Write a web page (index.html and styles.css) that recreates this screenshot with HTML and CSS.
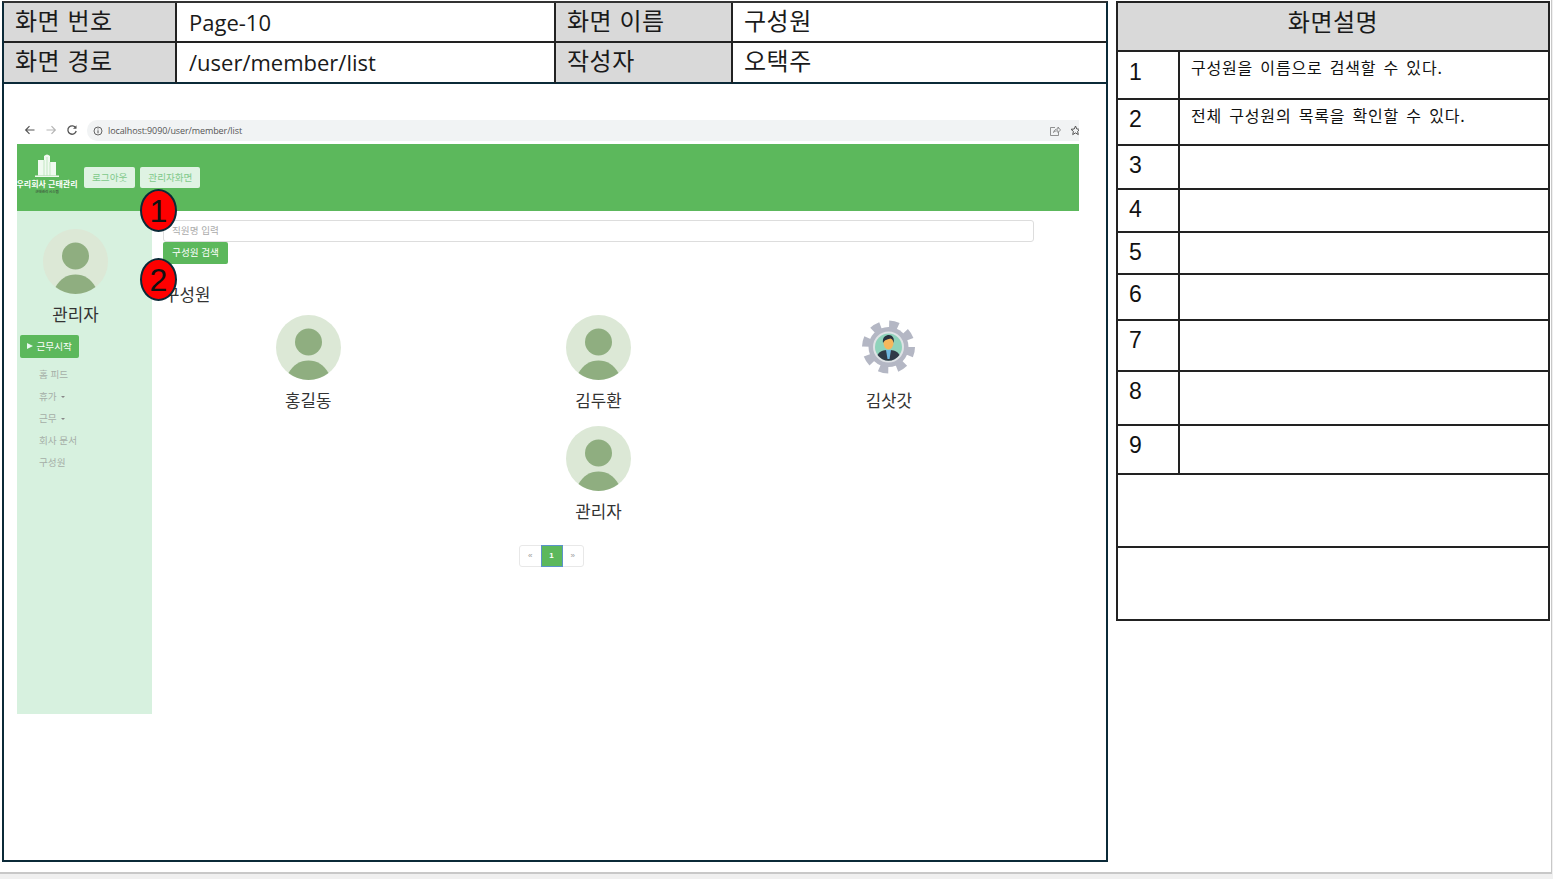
FILE: index.html
```html
<!DOCTYPE html>
<html lang="ko">
<head>
    <meta charset="UTF-8">
    <title>화면 설계 - Page-10</title>
    <link rel="stylesheet" href="styles.css">
</head>
<body>
    <div class="slide">
        <section class="screen">
            <div class="info">
                <div class="cell label">화면 번호</div>
                <div class="cell latin">Page-10</div>
                <div class="cell label">화면 이름</div>
                <div class="cell last">구성원</div>
                <div class="cell label">화면 경로</div>
                <div class="cell latin">/user/member/list</div>
                <div class="cell label">작성자</div>
                <div class="cell last">오택주</div>
            </div>

            <div class="shot">
                <div class="browser">
                    <svg class="nav-icon" width="12" height="12" viewBox="0 0 12 12"><path d="M10.5 6H2M5.5 2.2 1.7 6l3.8 3.8" fill="none" stroke="#555" stroke-width="1.2"/></svg>
                    <svg class="nav-icon" width="12" height="12" viewBox="0 0 12 12"><path d="M1.5 6H10M6.500 2.200 10.300 6l-3.800 3.800" fill="none" stroke="#b5b5b5" stroke-width="1.2"/></svg>
                    <svg class="nav-icon" width="12" height="12" viewBox="0 0 12 12"><path d="M9.800 4A4.200 4.200 0 1 0 10.200 7" fill="none" stroke="#555" stroke-width="1.300"/><path d="M10.500 1.300v3.500H7z" fill="#555"/></svg>
                    <div class="address">
                        <svg width="10" height="10" viewBox="0 0 10 10"><circle cx="5" cy="5" r="4" fill="none" stroke="#555" stroke-width="0.9"/><path d="M5 4.300v3M5 2.400v1" stroke="#555" stroke-width="1"/></svg>
                        <span class="url">localhost:9090/user/member/list</span>
                        <svg class="share" width="12" height="12" viewBox="0 0 12 12"><path d="M6 2.500H1.500v8h8V7M4.500 7.500c.5-2.500 2.300-3.500 4.500-3.500V2l2.500 3L9 7.500V5.800c-2 0-3.500.4-4.500 1.700z" fill="none" stroke="#777" stroke-width="0.8"/></svg>
                        <svg class="star" width="11" height="11" viewBox="0 0 11 11"><path d="M5.500 1l1.300 3 3.200.3-2.400 2.100.7 3.200-2.800-1.700-2.800 1.700.7-3.200L1 4.300 4.200 4z" fill="none" stroke="#555" stroke-width="1"/></svg>
                    </div>
                </div>

                <header class="topbar">
                    <div class="logo">
                        <svg width="24" height="23" viewBox="0 0 24 23">
                            <path d="M0 23h24v-1.500H0z" fill="#f0faf0"/>
                            <path d="M3 21.500V6h6v15.500zM9 21.500V2Q12 -1 15 2v19.500zM15 21.500V8h6v13.500z" fill="#f0faf0"/>
                            <path d="M9 6v15.500M15 8v13.500M12 3v18.500" stroke="#a5dba5" stroke-width="0.6"/>
                        </svg>
                        <strong>우리회사 근태관리</strong>
                        <small>근태관리 시스템</small>
                    </div>
                    <a class="top-btn">로그아웃</a>
                    <a class="top-btn">관리자화면</a>
                </header>

                <div class="page">
                    <aside class="sidebar">
                        <svg class="avatar side-avatar" viewBox="0 0 65 65"><use href="#person"/></svg>
                        <div class="side-name">관리자</div>
                        <button class="start-btn"><span class="play"></span>근무시작</button>
                        <ul class="menu">
                            <li>홈 피드</li>
                            <li>휴가<span class="caret"></span></li>
                            <li>근무<span class="caret"></span></li>
                            <li>회사 문서</li>
                            <li>구성원</li>
                        </ul>
                    </aside>

                    <main class="content">
                        <div class="search-input">직원명 입력</div>
                        <button class="search-btn">구성원 검색</button>
                        <h2>구성원</h2>
                        <div class="members">
                            <div class="member">
                                <svg class="avatar" viewBox="0 0 65 65"><use href="#person"/></svg>
                                <span>홍길동</span>
                            </div>
                            <div class="member">
                                <svg class="avatar" viewBox="0 0 65 65"><use href="#person"/></svg>
                                <span>김두환</span>
                            </div>
                            <div class="member">
                                <svg class="avatar" viewBox="0 0 65 65">
                                    <circle cx="32.500" cy="32" r="22.500" fill="none" stroke="#b4b7c4" stroke-width="8" stroke-dasharray="9 8.670"/>
                                    <circle cx="32.500" cy="32" r="20" fill="#b4b7c4"/>
                                    <circle cx="32.500" cy="32" r="15.500" fill="#dfe3e6"/>
                                    <circle cx="32.500" cy="32" r="13.500" fill="#8fd3bb"/>
                                    <path d="M21.500 40c2-4 6-5 11-5s9 1 11 5a13.500 13.500 0 0 1-22 0z" fill="#2f3a47"/>
                                    <path d="M30 35h5l-1.500 9h-2z" fill="#6fb7e0"/>
                                    <ellipse cx="32.500" cy="28" rx="5" ry="6.500" fill="#f6b75c"/>
                                    <path d="M27 28c-1-6 3-8 6-8s6 3 4.500 8c-.5-3-1.500-4-3-4.500-2 1-5.500.5-7.500 4.500z" fill="#28323f"/>
                                </svg>
                                <span>김삿갓</span>
                            </div>
                            <div class="member second">
                                <svg class="avatar" viewBox="0 0 65 65"><use href="#person"/></svg>
                                <span>관리자</span>
                            </div>
                        </div>
                        <nav class="pager">
                            <a>«</a>
                            <a class="current">1</a>
                            <a>»</a>
                        </nav>
                    </main>
                </div>

                <div class="marker one">1</div>
                <div class="marker two">2</div>
            </div>
        </section>

        <section class="desc">
            <div class="desc-title">화면설명</div>
            <div class="num h48">1</div><div class="text h48">구성원을 이름으로 검색할 수 있다.</div>
            <div class="num h46">2</div><div class="text h46">전체 구성원의 목록을 확인할 수 있다.</div>
            <div class="num">3</div><div class="text"></div>
            <div class="num">4</div><div class="text"></div>
            <div class="num">5</div><div class="text"></div>
            <div class="num">6</div><div class="text"></div>
            <div class="num">7</div><div class="text"></div>
            <div class="num">8</div><div class="text"></div>
            <div class="num">9</div><div class="text"></div>
            <div class="desc-empty"></div>
            <div class="desc-empty"></div>
        </section>
    </div>

    <svg width="0" height="0" class="defs">
        <defs>
            <g id="person">
                <circle cx="32.500" cy="32.500" r="32.500" fill="#dce8d6"/>
                <circle cx="32.500" cy="27" r="13.500" fill="#8fae80"/>
                <path d="M12.500 58.100C17 50 24 45.500 32.500 45.500S48 50 52.500 58.100A32.500 32.500 0 0 1 12.500 58.100z" fill="#8fae80"/>
            </g>
        </defs>
    </svg>
</body>
</html>
```

FILE: styles.css
```css
* {
    box-sizing: border-box;
}
body {
    margin: 0;
    height: 879px;
    overflow: hidden;
    background-color: #f0f0f0;
    color: #111;
    font-family: "Noto Sans CJK KR", "Noto Sans", sans-serif;
}
.slide {
    display: flex;
    align-items: flex-start;
    gap: 8px;
    width: 1552px;
    height: 874px;
    padding: 1px 0 0 2px;
    background-color: white;
    border-right: 1px solid #c8c8c8;
    border-bottom: 2px solid #c8c8c8;
}
.defs {
    position: absolute;
}

/* left frame */
.screen {
    width: 1106px;
    height: 861px;
    border: 2px solid #0b2a38;
    border-top-color: #333;
}
.info {
    display: grid;
    grid-template-columns: 173px 379px 177px 1fr;
    grid-template-rows: 40px 41px;
}
.cell {
    padding: 0 0 4px 11px;
    font-size: 24px;
    line-height: 34px;
    letter-spacing: 0.500px;
    color: #1a1a1a;
    border-right: 2px solid #222;
    border-bottom: 2px solid #222;
    white-space: nowrap;
}
.cell.label {
    background-color: #d9d9d9;
}
.cell.latin {
    padding: 2px 0 0 12px;
    font-family: "Open Sans", sans-serif;
    font-size: 22px;
    letter-spacing: 0;
}
.cell.last {
    border-right: none;
}
.info .cell:nth-child(n+5) {
    border-bottom-color: #0b2a38;
}

/* pasted screenshot */
.shot {
    position: relative;
    width: 1062px;
    height: 594px;
    margin: 36px 0 0 13px;
}
.browser {
    display: flex;
    align-items: flex-start;
    height: 24px;
    padding-left: 7px;
    gap: 9px;
}
.nav-icon {
    margin-top: 4px;
}
.address {
    display: flex;
    align-items: center;
    gap: 5px;
    flex: 1;
    height: 21px;
    padding-left: 6px;
    overflow: hidden;
    background-color: #f1f3f4;
    border-radius: 10px 0 0 10px;
}
.url {
    font-family: "Open Sans", sans-serif;
    font-size: 9px;
    letter-spacing: -0.1px;
    color: #555;
}
.share {
    margin-left: auto;
}
.star {
    margin: 0 -2px 0 4px;
}
.topbar {
    display: flex;
    align-items: flex-start;
    gap: 5px;
    height: 67px;
    background-color: #5cb85c;
}
.logo {
    display: flex;
    flex-direction: column;
    align-items: center;
    width: 60px;
    margin-right: 2px;
    padding-top: 10px;
    color: white;
}
.logo strong {
    margin-top: 1px;
    font-size: 8px;
    line-height: 12px;
    white-space: nowrap;
}
.logo small {
    font-size: 3.500px;
    line-height: 4px;
    color: #333;
    white-space: nowrap;
}
.top-btn {
    height: 21px;
    margin-top: 23px;
    padding: 0 8px;
    font-size: 9.600px;
    line-height: 20px;
    color: #80c98a;
    background-color: #dff3e3;
    border-radius: 2px;
}
.page {
    display: flex;
    height: 503px;
}

/* sidebar */
.sidebar {
    width: 135px;
    padding-top: 18px;
    background-color: #d7f1df;
}
.avatar {
    display: block;
    width: 65px;
    height: 65px;
}
.side-avatar {
    margin-left: 26px;
}
.side-name {
    width: 117px;
    margin-top: 8px;
    font-size: 16.800px;
    line-height: 24px;
    color: #333;
    text-align: center;
}
.start-btn {
    display: flex;
    align-items: center;
    gap: 4px;
    width: 59px;
    height: 23px;
    margin: 9px 0 0 2.500px;
    padding: 0 0 2px 7px;
    font-family: inherit;
    font-size: 9.600px;
    color: white;
    background-color: #5cb85c;
    border: none;
    border-radius: 2px;
    white-space: nowrap;
}
.play {
    width: 0;
    height: 0;
    border-left: 6px solid #e8f8f0;
    border-top: 3.500px solid transparent;
    border-bottom: 3.500px solid transparent;
}
.menu {
    margin: 4.500px 0 0;
    padding: 0 0 0 22px;
    list-style: none;
    font-size: 9.600px;
    line-height: 22px;
    color: #a5aea7;
}
.caret {
    display: inline-block;
    margin-left: 4px;
    vertical-align: middle;
    border-top: 2.500px solid #888;
    border-left: 2.500px solid transparent;
    border-right: 2.500px solid transparent;
}

/* main */
.content {
    flex: 1;
    padding: 9px 45px 0 11px;
}
.search-input {
    height: 22px;
    padding-left: 8px;
    font-size: 9.600px;
    line-height: 18px;
    color: #aaa;
    border: 1px solid #ddd;
    border-radius: 3px;
}
.search-btn {
    display: block;
    width: 65px;
    height: 22px;
    padding: 0 0 2px;
    font-family: inherit;
    font-size: 9.600px;
    color: white;
    background-color: #5cb85c;
    border: none;
    border-radius: 2px;
}
h2 {
    margin: 19px 0 0 1px;
    font-size: 16.800px;
    font-weight: 400;
    line-height: 22px;
    color: #333;
}
.members {
    display: grid;
    grid-template-columns: repeat(3, 1fr);
    margin-top: 10px;
}
.member {
    display: flex;
    flex-direction: column;
    align-items: center;
    height: 111px;
    font-size: 16.800px;
    line-height: 22px;
    color: #333;
}
.member span {
    margin-top: 9px;
}
.member.second {
    grid-column: 2;
}
.pager {
    display: flex;
    width: 65px;
    height: 22px;
    margin: 8px 0 0 356px;
    font-family: "Liberation Sans", sans-serif;
    font-size: 8px;
    line-height: 20px;
    text-align: center;
    color: #999;
    background-color: white;
    border: 1px solid #e8e8e8;
    border-radius: 3px;
}
.pager a {
    flex: 1;
}
.pager .current {
    flex: 0 0 22px;
    height: 22px;
    margin-top: -1px;
    font-weight: 700;
    line-height: 20px;
    color: white;
    background-color: #5cb85c;
    border: 1px solid #5b93c9;
}

/* numbered callouts */
.marker {
    position: absolute;
    left: 123px;
    width: 37px;
    height: 43px;
    font-family: "Liberation Sans", sans-serif;
    font-size: 32px;
    line-height: 41px;
    text-align: center;
    color: #111;
    background-color: #ff0000;
    border: 2px solid #0b2a38;
    border-radius: 50%;
}
.marker.one {
    top: 69px;
}
.marker.two {
    top: 138px;
}

/* right table */
.desc {
    display: grid;
    grid-template-columns: 62px 1fr;
    grid-template-rows: 49px 48px 46px 44px 43px 42px 46px 51px 54px 49px 73px 73px;
    width: 434px;
    border: 2px solid #222;
    border-bottom: none;
}
.desc-title {
    grid-column: 1 / 3;
    padding-bottom: 12px;
    font-size: 24px;
    letter-spacing: 0.500px;
    line-height: 36px;
    text-align: center;
    color: #1a1a1a;
    background-color: #d9d9d9;
    border-bottom: 2px solid #222;
}
.num {
    padding: 4px 0 0 11px;
    font-family: "Liberation Sans", sans-serif;
    font-size: 23px;
    line-height: 30px;
    border-right: 2px solid #222;
    border-bottom: 2px solid #222;
}
.num.h48 {
    padding-top: 5px;
}
.text {
    padding: 3px 0 0 11px;
    font-size: 16px;
    line-height: 24px;
    letter-spacing: 0.800px;
    word-spacing: 2px;
    border-bottom: 2px solid #222;
    white-space: nowrap;
}
.desc-empty {
    grid-column: 1 / 3;
    border-bottom: 2px solid #222;
}
```
